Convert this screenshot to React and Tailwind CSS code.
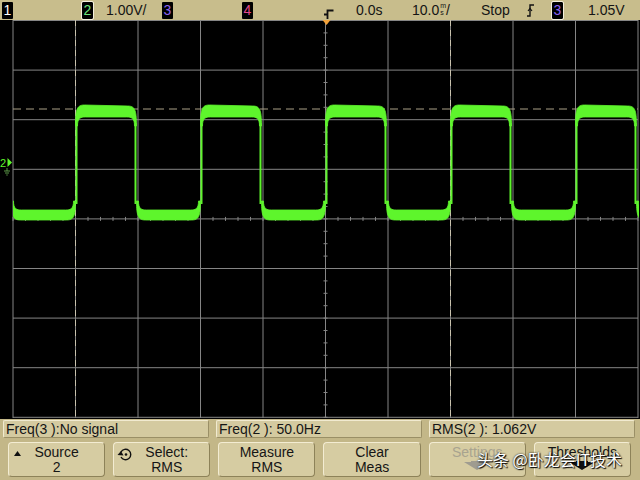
import React from 'react';

const GREEN = '#5ef52c';
const GRID_X = Array.from({ length: 11 }, (_, i) => 13 + i * 62.5);
const GRID_Y = Array.from({ length: 9 }, (_, i) => 0.5 + i * 49.6);

// band levels in screen coords (svg starts at y=20)
const HI = [85, 97];
const LO = [190, 200];

const highBand = (xr, xf) => {
  const [t, b] = HI;
  return `M ${xr} ${b + 9} C ${xr} ${t + 3} ${xr + 2} ${t} ${xr + 9} ${t}
    L ${xf - 9} ${t + 1} C ${xf - 2} ${t + 1} ${xf} ${t + 4} ${xf} ${b + 9}
    L ${xf - 2} ${b + 9} C ${xf - 2} ${b + 1} ${xf - 5} ${b} ${xf - 10} ${b}
    L ${xr + 10} ${b} C ${xr + 5} ${b} ${xr + 2} ${b + 1} ${xr + 2} ${b + 9} Z`;
};

const lowBand = (xf, xn) => {
  const [t, b] = LO;
  return `M ${xf} ${t - 9} C ${xf} ${b - 3} ${xf + 2} ${b} ${xf + 9} ${b}
    L ${xn - 9} ${b} C ${xn - 2} ${b} ${xn} ${b - 3} ${xn} ${t - 9}
    L ${xn - 2} ${t - 9} C ${xn - 2} ${t - 1} ${xn - 5} ${t} ${xn - 10} ${t}
    L ${xf + 10} ${t} C ${xf + 5} ${t} ${xf + 2} ${t - 1} ${xf + 2} ${t - 9} Z`;
};

const Waveform = () => {
  const periods = [-1, 0, 1, 2, 3, 4];
  return (
    <g clipPath="url(#screen)">
      {periods.map((k) => {
        const xr = 75.5 + 125 * k;
        const xf = xr + 61;
        const xn = xr + 125;
        return (
          <g key={k} fill={GREEN} stroke={GREEN}>
            <path d={highBand(xr, xf)} strokeWidth="0.8" />
            <path d={lowBand(xf, xn)} strokeWidth="0.8" />
            <line x1={xr + 1} y1={HI[1] + 6} x2={xr + 1} y2={LO[0] - 6} strokeWidth="2" />
            <line x1={xf - 1} y1={HI[1] + 6} x2={xf - 1} y2={LO[0] - 6} strokeWidth="2" />
          </g>
        );
      })}
    </g>
  );
};

const Screen = () => {
  const cx = GRID_X[5];
  const cy = GRID_Y[4];
  const vTicks = Array.from({ length: 33 }, (_, i) => 0.5 + i * 12.4);
  const hTicks = Array.from({ length: 51 }, (_, i) => 13 + i * 12.5);
  return (
    <svg width="640" height="399" className="block bg-black">
      <defs>
        <clipPath id="screen">
          <rect x="13" y="0" width="626" height="399" />
        </clipPath>
      </defs>
      {GRID_X.map((x) => (
        <line key={'x' + x} x1={x} y1="0" x2={x} y2="398" stroke="#858585" strokeWidth="1" />
      ))}
      {GRID_Y.map((y) => (
        <line key={'y' + y} x1="13" y1={y} x2="638" y2={y} stroke="#858585" strokeWidth="1" />
      ))}
      {vTicks.map((y) => (
        <line key={'vt' + y} x1={cx - 2} y1={y} x2={cx + 2} y2={y} stroke="#858585" />
      ))}
      {hTicks.map((x) => (
        <line key={'ht' + x} x1={x} y1={cy - 2} x2={x} y2={cy + 2} stroke="#858585" />
      ))}
      {/* cursors */}
      <line x1="75.5" y1="0" x2="75.5" y2="398" stroke="#c9c2ad" strokeDasharray="6 4" />
      <line x1="450.5" y1="0" x2="450.5" y2="398" stroke="#c9c2ad" strokeDasharray="6 4" />
      <line x1="13" y1="89" x2="638" y2="89" stroke="#a99f86" strokeWidth="1.2" strokeDasharray="8 5" />
      <Waveform />
      {/* trigger position marker */}
      <path d="M322.5 0 L330.5 0 L326.5 5 Z" fill="#f2a23a" />
      {/* channel 2 marker */}
      <text x="0" y="147" fill={GREEN} fontSize="11" fontFamily="Liberation Sans, sans-serif">2</text>
      <path d="M7.5 138 L12 142.5 L7.5 147 Z" fill={GREEN} />
      <path d="M4 151 H10 M5 153 H9 M6.3 155 H7.7 M7 148 V151" stroke="#5d9a48" strokeWidth="1" />
    </svg>
  );
};

const Badge = ({ n, color, ring }) => (
  <span
    className={`inline-flex items-center justify-center w-[11px] h-[17px] bg-black rounded-[1px] text-[14px] leading-none ${
      ring ? 'outline outline-1 outline-[#f4efdc]' : ''
    }`}
    style={{ color }}
  >
    {n}
  </span>
);

const TopBar = () => (
  <div className="flex items-center h-[20px] bg-[#c8bd8c] text-[14px] text-[#141414] leading-none">
    <div className="w-[80px] pl-[2px]">
      <Badge n="1" color="#ffffff" />
    </div>
    <div className="w-[80px] pl-[2px] flex items-center">
      <Badge n="2" color="#6de37a" ring />
      <span className="ml-[13px]">1.00V/</span>
    </div>
    <div className="w-[80px] pl-[2px]">
      <Badge n="3" color="#8f63f2" />
    </div>
    <div className="w-[80px] pl-[2px]">
      <Badge n="4" color="#e2488c" />
    </div>
    <div className="w-[80px] flex items-center">
      <svg width="14" height="20" className="ml-[2px] block">
        <path d="M11.5 10.5 H5.5 V19 M2 14.5 H5.5" stroke="#111" strokeWidth="1.8" fill="none" />
      </svg>
      <span className="ml-[20px]">0.0s</span>
    </div>
    <div className="w-[70px] pl-[12px] flex items-center">
      <span>10.0</span>
      <span className="flex flex-col text-[7px] leading-[7px] ml-[1px] -mt-[2px]">
        <span>m</span>
        <span>s</span>
      </span>
      <span>/</span>
    </div>
    <div className="w-[50px] pl-[11px]">Stop</div>
    <div className="w-[32px] pl-[6px]">
      <svg width="10" height="16" className="block">
        <path d="M1 14 H4 V3 H8" stroke="#111" strokeWidth="1.4" fill="none" />
        <path d="M2 9 L4 6.5 L6 9" stroke="#111" strokeWidth="1.2" fill="none" />
      </svg>
    </div>
    <div className="flex items-center">
      <Badge n="3" color="#8f63f2" ring />
      <span className="ml-[25px]">1.05V</span>
    </div>
  </div>
);

const MeasBox = ({ children, className = '' }) => (
  <div
    className={`h-[18px] bg-[#d4caa0] border border-[#f1ead0] border-r-[#9a8f66] border-b-[#9a8f66] rounded-[2px] px-[2px] text-[14px] leading-[16px] text-[#151515] ${className}`}
  >
    {children}
  </div>
);

const SoftKey = ({ children, dim }) => (
  <div
    className={`relative h-[35px] bg-[#d6cca2] border border-[#f3ecd2] border-r-[#8d8259] border-b-[#8d8259] rounded-[4px] flex flex-col items-center justify-center text-[14px] leading-[15px] ${
      dim ? 'text-[#a8a38f]' : 'text-[#151515]'
    }`}
  >
    {children}
  </div>
);

const DownArrow = ({ color }) => (
  <svg width="28" height="10" className="block mt-[1px]">
    <path d="M1 1 L27 1 L14 9 Z" fill={color} />
    <path d="M8 0 H20 V3 H8 Z" fill={color} />
  </svg>
);

export default function App() {
  return (
    <div
      className="w-[640px] h-[480px] bg-black overflow-hidden flex flex-col"
      style={{ fontFamily: '"Liberation Sans", Arial, sans-serif' }}
    >
      <TopBar />
      <Screen />
      <div className="relative flex-1 bg-[#c3b788] pt-[1px]">
        <div className="flex px-[3px] gap-[7px]">
          <MeasBox className="w-[206px]">Freq(3 ):No signal</MeasBox>
          <MeasBox className="w-[206px]">Freq(2 ): 50.0Hz</MeasBox>
          <MeasBox className="w-[206px]">RMS(2 ): 1.062V</MeasBox>
        </div>
        <div className="grid grid-cols-6 gap-[8px] pl-[8px] pr-[9px] mt-[4px]">
          <SoftKey>
            <svg width="7" height="5" className="absolute left-[5px] top-[8px]">
              <path d="M0 5 L3.5 0 L7 5 Z" fill="#111" />
            </svg>
            <span>Source</span>
            <span>2</span>
          </SoftKey>
          <SoftKey>
            <svg width="16" height="16" className="absolute left-[3px] top-[3px]">
              <path d="M4 6 A5.2 5.2 0 1 1 4 11" stroke="#111" strokeWidth="1.4" fill="none" />
              <path d="M0.5 9 L4 5 L6.5 9.5 Z" fill="#111" />
              <circle cx="9" cy="8.5" r="1.3" fill="#111" />
            </svg>
            <span className="pl-[10px]">Select:</span>
            <span className="pl-[10px]">RMS</span>
          </SoftKey>
          <SoftKey>
            <span>Measure</span>
            <span>RMS</span>
          </SoftKey>
          <SoftKey>
            <span>Clear</span>
            <span>Meas</span>
          </SoftKey>
          <SoftKey dim>
            <span className="-mt-[3px]">Settings</span>
            <DownArrow color="#9f9c90" />
          </SoftKey>
          <SoftKey>
            <span className="-mt-[3px]">Thresholds</span>
            <DownArrow color="#111" />
          </SoftKey>
        </div>
        <div
          className="absolute left-[477px] top-[32px] text-[16px] text-white leading-none"
          style={{
            fontFamily: '"Noto Sans CJK SC", "Liberation Sans", sans-serif',
            textShadow: '0 0 2px #000, 1px 1px 1px #000',
          }}
        >
          头条 @卧龙会IT技术
        </div>
      </div>
    </div>
  );
}
